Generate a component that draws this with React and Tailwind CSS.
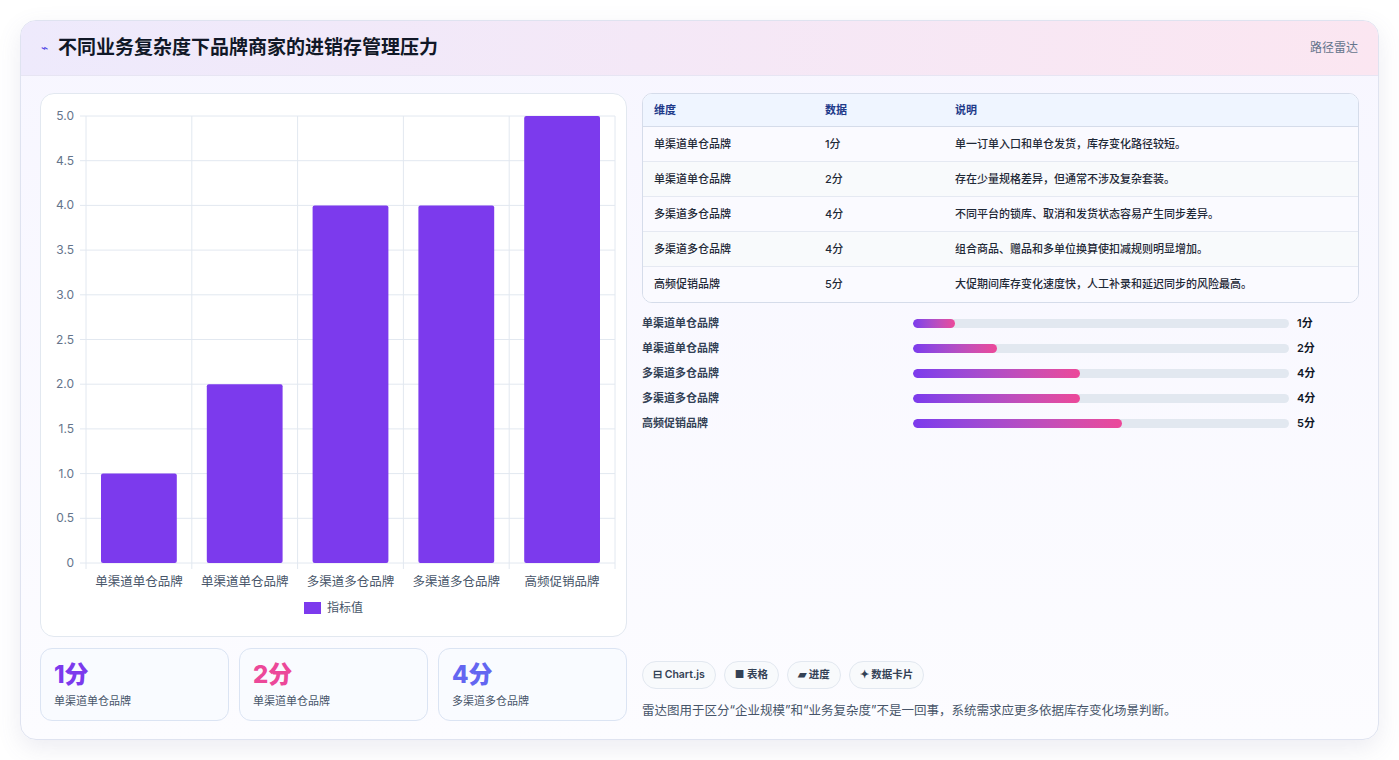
import React from "react";

const rows = [
  ["单渠道单仓品牌", 1, "单一订单入口和单仓发货，库存变化路径较短。"],
  ["单渠道单仓品牌", 2, "存在少量规格差异，但通常不涉及复杂套装。"],
  ["多渠道多仓品牌", 4, "不同平台的锁库、取消和发货状态容易产生同步差异。"],
  ["多渠道多仓品牌", 4, "组合商品、赠品和多单位换算使扣减规则明显增加。"],
  ["高频促销品牌", 5, "大促期间库存变化速度快，人工补录和延迟同步的风险最高。"],
];

function Chart() {
  const L = 45, R = 574, T = 22, B = 469;
  const h = B - T;
  const cw = (R - L) / 5;
  const ticks = [0, 0.5, 1, 1.5, 2, 2.5, 3, 3.5, 4, 4.5, 5];
  return (
    <svg width="586" height="543" className="block" style={{ fontFamily: "Inter, 'Noto Sans CJK SC', sans-serif" }}>
      {ticks.map((t) => {
        const y = B - (t / 5) * h;
        return (
          <g key={t}>
            <line x1={L - 6} x2={R} y1={y} y2={y} stroke="#e2e8f0" />
            <text x={L - 12} y={y + 4} textAnchor="end" fontSize="12" fill="#64748b">
              {t === 0 ? "0" : t.toFixed(1)}
            </text>
          </g>
        );
      })}
      {[0, 1, 2, 3, 4, 5].map((i) => (
        <line key={i} x1={L + i * cw} x2={L + i * cw} y1={T} y2={B + 6} stroke="#e2e8f0" />
      ))}
      {rows.map((r, i) => {
        const bh = (r[1] / 5) * h;
        return (
          <g key={i}>
            <rect x={L + i * cw + 15} y={B - bh} width={cw - 30} height={bh} rx="2" fill="#7c3aed" />
            <text x={L + i * cw + cw / 2} y={B + 23} textAnchor="middle" fontSize="12.5" fill="#475569">
              {r[0]}
            </text>
          </g>
        );
      })}
      <rect x="263" y="508" width="17" height="12" fill="#7c3aed" />
      <text x="286" y="518" fontSize="12" fill="#475569">指标值</text>
    </svg>
  );
}

export default function App() {
  const font = { fontFamily: "Inter, 'Noto Sans CJK SC', sans-serif" };
  return (
    <div className="w-[1399px] h-[760px] bg-white p-[20px] pb-[20px]" style={font}>
      <div className="h-[720px] rounded-[16px] border border-[#dfe3f0] bg-gradient-to-b from-[#f7f6ff] to-[#fcfcff] shadow-[0_8px_24px_rgba(100,100,150,0.12)] overflow-hidden flex flex-col">
        <div className="h-[55px] shrink-0 flex items-center justify-between px-[20px] border-b border-[#e7e5f3] bg-gradient-to-r from-[#eeeafc] to-[#fbe6f1]">
          <div className="flex items-center gap-[10px]">
            <span className="text-[#4f46e5] text-[12px]">⌁</span>
            <span className="text-[19px] font-bold text-[#111827]">不同业务复杂度下品牌商家的进销存管理压力</span>
          </div>
          <span className="text-[12px] text-[#64748b]">路径雷达</span>
        </div>
        <div className="flex-1 flex gap-[15px] px-[19px] pt-[17px] pb-[18px]">
          <div className="w-[587px] flex flex-col gap-[11px]">
            <div className="h-[544px] rounded-[14px] border border-[#e2e8f0] bg-white">
              <Chart />
            </div>
            <div className="grid grid-cols-3 gap-[10px]">
              {[["1分", "text-[#7c3aed]", "单渠道单仓品牌"], ["2分", "text-[#ec4899]", "单渠道单仓品牌"], ["4分", "text-[#6366f1]", "多渠道多仓品牌"]].map((c, i) => (
                <div key={i} className="h-[73px] rounded-[12px] border border-[#dbe4f3] bg-[#f9fbff] px-[13px] pt-[11px]">
                  <div className={"text-[24px] font-extrabold leading-[30px] " + c[1]}>{c[0]}</div>
                  <div className="text-[11px] text-[#475569] mt-[3px]">{c[2]}</div>
                </div>
              ))}
            </div>
          </div>
          <div className="flex-1 flex flex-col justify-between">
            <div>
              <div className="rounded-[10px] border border-[#d5dcea] overflow-hidden bg-white">
                <div className="flex h-[33px] items-center bg-[#eff5ff] border-b border-[#d5dcea] text-[11px] font-semibold text-[#1e3a8a]">
                  <div className="w-[182px] pl-[11px]">维度</div>
                  <div className="w-[130px]">数据</div>
                  <div>说明</div>
                </div>
                {rows.map((r, i) => (
                  <div key={i} className={"flex h-[35px] items-center text-[11px] text-[#1f2937] font-medium " + (i < 4 ? "border-b border-[#e5e9f2] " : "") + (i % 2 ? "bg-[#f8fafc]" : "bg-[#fafaff]")}>
                    <div className="w-[182px] pl-[11px]">{r[0]}</div>
                    <div className="w-[130px]">{r[1]}分</div>
                    <div>{r[2]}</div>
                  </div>
                ))}
              </div>
              <div className="mt-[12px] flex flex-col gap-[9px]">
                {rows.map((r, i) => (
                  <div key={i} className="flex items-center h-[16px] text-[11px] font-semibold">
                    <div className="w-[271px] text-[#334155]">{r[0]}</div>
                    <div className="w-[376px] h-[9px] rounded-full bg-[#e2e8f0] overflow-hidden">
                      <div className="h-full rounded-full bg-gradient-to-r from-[#7c3aed] to-[#ec4899]" style={{ width: `${(r[1] / 9) * 100}%` }} />
                    </div>
                    <div className="ml-[8px] text-[#111827]">{r[1]}分</div>
                  </div>
                ))}
              </div>
            </div>
            <div>
              <div className="flex gap-[8px]">
                {["⊟ Chart.js", "■ 表格", "▰ 进度", "✦ 数据卡片"].map((t) => (
                  <span key={t} className="h-[28px] px-[10px] flex items-center rounded-full border border-[#e2e8f0] bg-[#f8fafc] text-[10.5px] font-semibold text-[#334155]">{t}</span>
                ))}
              </div>
              <div className="mt-[13px] text-[12.5px] text-[#475569]">雷达图用于区分“企业规模”和“业务复杂度”不是一回事，系统需求应更多依据库存变化场景判断。</div>
            </div>
          </div>
        </div>
      </div>
    </div>
  );
}
